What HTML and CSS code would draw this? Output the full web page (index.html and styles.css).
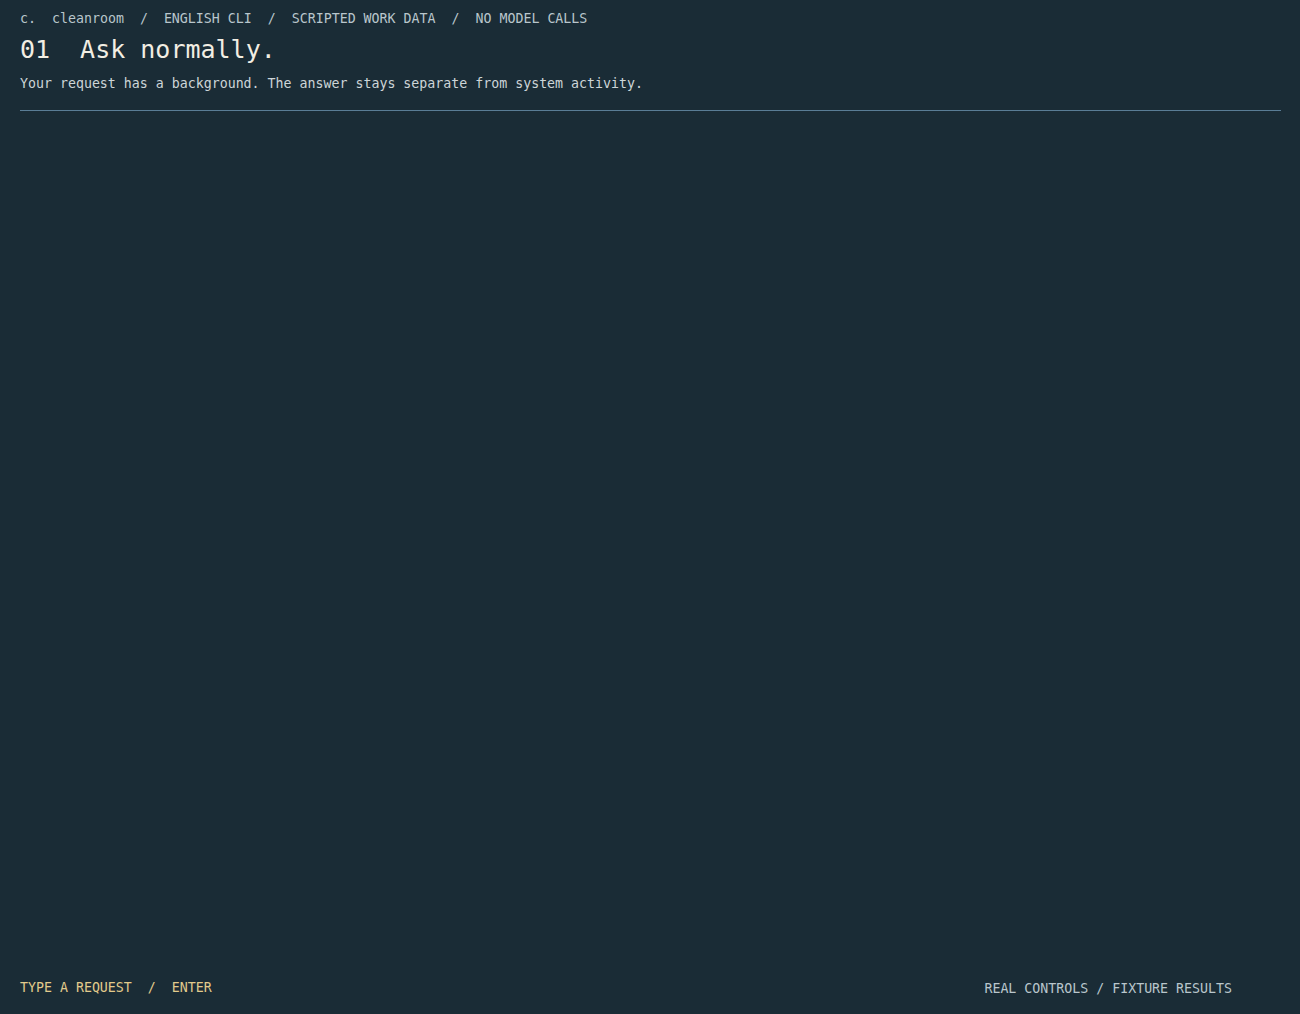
FILE: index.html
```html
<!DOCTYPE html>
<html lang="en">
<head>
<meta charset="utf-8">
<title>cleanroom</title>
<link rel="stylesheet" href="styles.css">
</head>
<body>
<div class="app">
  <header class="top">
    <nav class="crumbs"><span class="logo">c.</span><span class="crumb">cleanroom</span><span class="sep">/</span><span class="crumb">ENGLISH CLI</span><span class="sep">/</span><span class="crumb">SCRIPTED WORK DATA</span><span class="sep">/</span><span class="crumb">NO MODEL CALLS</span></nav>
    <h1 class="title"><span class="num">01</span><span>Ask normally.</span></h1>
    <p class="lede">Your request has a background. The answer stays separate from system activity.</p>
  </header>
  <main class="stage"></main>
  <footer class="bottom">
    <div class="prompt"><span>TYPE A REQUEST</span><span class="sep">/</span><span>ENTER</span></div>
    <div class="note">REAL CONTROLS / FIXTURE RESULTS</div>
  </footer>
</div>
</body>
</html>
```
FILE: styles.css
```css
html, body {
  margin: 0;
  padding: 0;
  background: #1a2c36;
}
body {
  font-family: "DejaVu Sans Mono", "Liberation Mono", monospace;
  font-size: 13.28px;
  line-height: 20px;
  color: #b9c6cc;
}
.app {
  min-height: 100vh;
  box-sizing: border-box;
  display: flex;
  flex-direction: column;
  padding: 9px 19px 15px 20px;
}
.top {
  border-bottom: 1px solid #5a7d96;
  padding-bottom: 16px;
}
.crumbs {
  display: flex;
  white-space: pre;
}
.logo {
  margin-right: 16px;
}
.sep {
  margin: 0 16px;
}
.title {
  margin: 6px 0 0 0;
  font-size: 25px;
  line-height: 30px;
  font-weight: normal;
  color: #f2eee3;
  display: flex;
  gap: 30px;
}
.lede {
  margin: 9px 0 0 0;
  color: #cdd5d8;
}
.stage {
  flex: 1;
}
.bottom {
  display: flex;
  justify-content: space-between;
  align-items: flex-start;
  padding-right: 49px;
}
.prompt {
  display: flex;
  color: #e2cb8c;
}
.note {
  margin-top: 1px;
  color: #b9c6cc;
}
```
